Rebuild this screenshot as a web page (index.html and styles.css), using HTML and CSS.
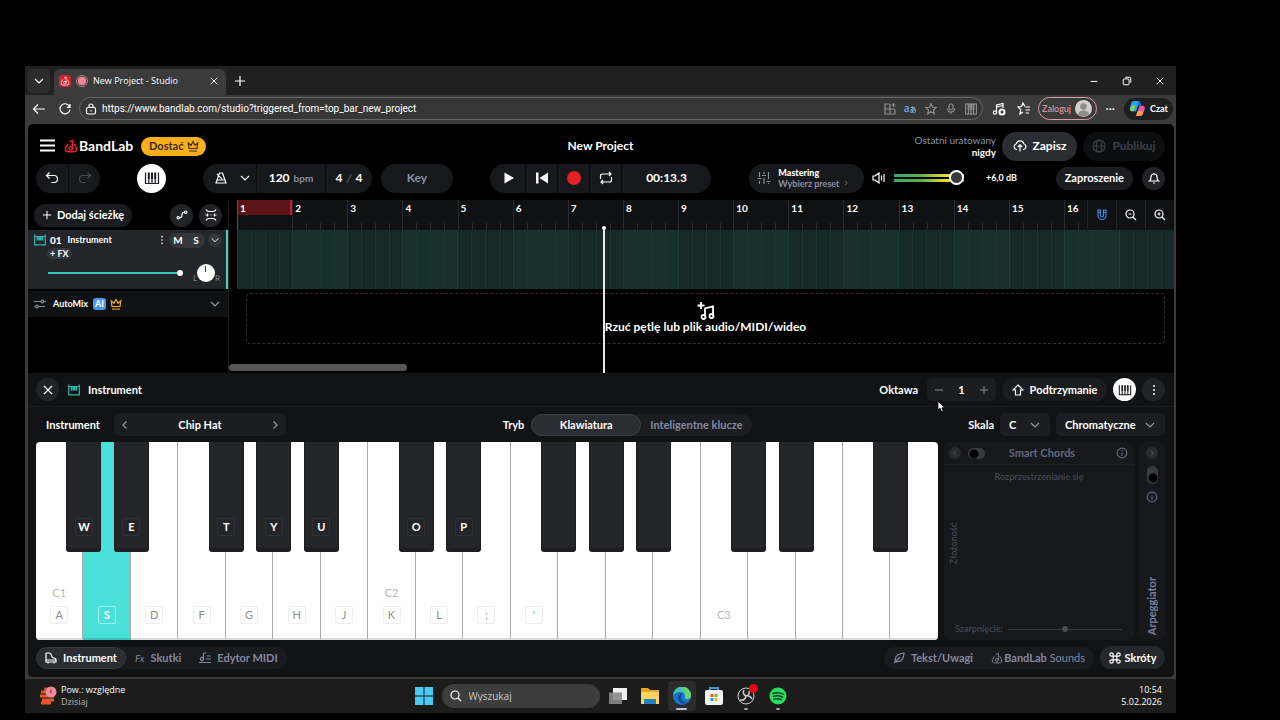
FILE: index.html
```html
<!DOCTYPE html>
<html lang="pl">
<head>
    <meta charset="UTF-8">
    <meta name="viewport" content="width=device-width, initial-scale=1.0">
    <title>New Project - Studio</title>
    <link rel="stylesheet" href="styles.css">
</head>
<body>
    <svg class="sprite" aria-hidden="true">
        <symbol id="chevron-down" viewBox="0 0 12 12"><path d="M2 4l4 4 4-4"/></symbol>
        <symbol id="chevron-left" viewBox="0 0 12 12"><path d="M7.500 2.500L4 6l3.500 3.500"/></symbol>
        <symbol id="chevron-right" viewBox="0 0 12 12"><path d="M4.500 2.500L8 6l-3.500 3.500"/></symbol>
        <symbol id="close" viewBox="0 0 12 12"><path d="M2 2l8 8M10 2l-8 8"/></symbol>
        <symbol id="plus" viewBox="0 0 12 12"><path d="M6 1v10M1 6h10"/></symbol>
        <symbol id="bandlab" viewBox="0 0 16 16"><path d="M4.500 5.500L2 10q-1.500 4.500 3 4.500h6q4.500 0 3-4.500l-2.500-4.500"/><path d="M9.800 10.500V1.500L6.500 3.500"/><circle cx="7.800" cy="10.500" r="2"/></symbol>
        <symbol id="crown" viewBox="0 0 12 12"><path d="M2 8.500L1.200 3l2.800 2.300L6 1.500l2 3.800L10.800 3 10 8.500zM2 11h8"/></symbol>
        <symbol id="keys" viewBox="0 0 16 16"><path d="M1.500 2.500v11h13v-11M4.800 9.500v4M8 9.500v4M11.200 9.500v4"/><path class="thick" d="M4.800 2.500v7M8 2.500v7M11.200 2.500v7"/></symbol>
        <symbol id="midi" viewBox="0 0 12 12"><path d="M.7 .5v10.300h10.600V.5M.7 2.500h10.600"/><path class="thick" d="M3.700 2.500v4M6 2.500v4M8.300 2.500v4"/></symbol>
        <symbol id="info" viewBox="0 0 12 12"><circle cx="6" cy="6" r="4.800"/><path d="M6 5.300V9M6 3.200v1"/></symbol>
        <symbol id="dots" viewBox="0 0 12 12"><g class="solid"><circle cx="6" cy="2" r="1"/><circle cx="6" cy="6" r="1"/><circle cx="6" cy="10" r="1"/></g></symbol>
    </svg>

    <div class="screen">
        <div class="browser">
            <div class="tabs">
                <button class="tab-menu" aria-label="Karty"><svg class="icon"><use href="#chevron-down"/></svg></button>
                <div class="tab">
                    <span class="favicon"><svg class="icon s10"><use href="#bandlab"/></svg></span>
                    <span class="rec-dot"></span>
                    <span class="tab-title">New Project - Studio</span>
                    <button aria-label="Zamknij kartę"><svg class="icon s10"><use href="#close"/></svg></button>
                </div>
                <button class="new-tab" aria-label="Nowa karta"><svg class="icon"><use href="#plus"/></svg></button>
                <div class="window-buttons">
                    <button aria-label="Minimalizuj"><svg class="icon s10" viewBox="0 0 12 12"><path d="M2 6.500h8"/></svg></button>
                    <button aria-label="Przywróć"><svg class="icon s10" viewBox="0 0 12 12"><rect x="1.500" y="3.500" width="7" height="7" rx="1"/><path d="M4 1.500h5.500l1 1V8"/></svg></button>
                    <button aria-label="Zamknij"><svg class="icon s10"><use href="#close"/></svg></button>
                </div>
            </div>
            <div class="address-row">
                <button aria-label="Wstecz"><svg class="icon s14" viewBox="0 0 14 14"><path d="M13 7H1.500M6 2.500L1.500 7 6 11.500"/></svg></button>
                <button class="reload" aria-label="Odśwież"><svg class="icon s14" viewBox="0 0 14 14"><path d="M11.800 5.200A5 5 0 1 0 12 7.500M12 2v3.300H8.700"/></svg></button>
                <div class="address">
                    <svg class="icon" viewBox="0 0 12 12"><rect x="1.500" y="4.500" width="9" height="6.500" rx="1.500"/><path d="M4 4.500V3a2 2 0 0 1 4 0v1.500M6 7v1.500"/></svg>
                    <input type="text" aria-label="Adres" value="https://www.bandlab.com/studio?triggered_from=top_bar_new_project">
                    <svg class="icon dim" viewBox="0 0 12 12"><path d="M5.500 1H1v10h10V6.500M1 6h10M6 1v10M9.500 0v4M7.500 2h4"/></svg>
                    <span class="translate">a<small>あ</small></span>
                    <svg class="icon dim" viewBox="0 0 12 12"><path d="M6 .8l1.500 3.500 3.800.3-2.900 2.500.9 3.700L6 8.800l-3.300 2 .9-3.700L.7 4.600l3.800-.3z"/></svg>
                    <svg class="icon dim" viewBox="0 0 12 12"><rect x="4" y="1" width="4" height="6" rx="2"/><path d="M2.500 5.500a3.500 3.500 0 0 0 7 0M6 9v2"/></svg>
                    <svg class="icon dim" viewBox="0 0 12 12"><rect x=".5" y="1" width="11" height="10"/><path d="M3.500 7v4M6 7v4M8.500 7v4"/><path class="thick" d="M3.500 1v6M6 1v6M8.500 1v6"/></svg>
                </div>
                <svg class="icon s14 ext" viewBox="0 0 14 14"><path d="M4.500 10.500V3L11 1.500V6M4.500 5L11 3.500"/><circle cx="3" cy="10.500" r="1.700"/><circle cx="10" cy="10" r="2.500" stroke-width="2"/></svg>
                <svg class="icon s14 fav" viewBox="0 0 14 14"><path d="M8 4.500L6 1 4.500 4.500 1 5l2.800 2.700L3 12l3-2M8.500 5H13M8.500 8H13M8.500 11H12"/></svg>
                <button class="login">Zaloguj <svg class="avatar" viewBox="0 0 18 18"><circle cx="9" cy="9" r="9" fill="#d2d0ce"/><circle cx="9" cy="7" r="3.500" fill="#8f8d8b"/><path d="M3 15q1-4 6-4t6 4q-2.500 2.500-6 2.500T3 15" fill="#8f8d8b"/></svg></button>
                <span class="more">···</span>
                <button class="copilot">
                    <svg viewBox="0 0 18 18"><path d="M5 1h6l-3.500 11H3Q0 12 1 8l1.500-5Q3 1 5 1" fill="#23a7e8"/><path d="M2 7l5-2-2 7H3Q0 11 2 7" fill="#8fd14b"/><path d="M11 6h3.500q3 0 2 4L15 14q-.6 3-3 3H7.500z" fill="#e655a8"/><path d="M7.500 17l1.500-5h6q-.5 5-3 5z" fill="#ffa04d"/><path d="M10 1q2 0 2.500 2.500L13 6H9z" fill="#2261d9"/></svg>
                    Czat
                </button>
            </div>

            <main class="studio">
                <header class="header">
                    <div class="header-left">
                        <button class="menu" aria-label="Menu"><svg class="icon s16" viewBox="0 0 16 16"><path d="M0 2.500h15M0 7.500h15M0 12.500h15"/></svg></button>
                        <a href="#" class="logo"><svg class="icon s14"><use href="#bandlab"/></svg>BandLab</a>
                        <button class="upgrade">Dostać <svg class="icon"><use href="#crown"/></svg></button>
                    </div>
                    <h1>New Project</h1>
                    <div class="header-right">
                        <p class="saved">Ostatni uratowany<br><b>nigdy</b></p>
                        <button class="pill save"><svg class="icon s14" viewBox="0 0 14 14"><path d="M4 10.500H3.500a3 3 0 0 1-.2-5.800 4 4 0 0 1 7.600 0 3 3 0 0 1-.4 5.800H10M7 12.500V6M4.800 8L7 5.800 9.200 8"/></svg>Zapisz</button>
                        <button class="pill publish" disabled><svg class="icon s14" viewBox="0 0 14 14"><circle cx="7" cy="7" r="6"/><ellipse cx="7" cy="7" rx="2.700" ry="6"/><path d="M1 7h12"/></svg>Publikuj</button>
                    </div>
                </header>

                <div class="transport">
                    <div class="transport-left">
                        <div class="group history">
                            <button aria-label="Cofnij"><svg class="icon s14" viewBox="0 0 14 14"><path d="M4.500 1.500L1.500 4.500l3 3M1.500 4.500h7.500a3.500 3.500 0 0 1 0 7H6.500"/></svg></button>
                            <button aria-label="Ponów" disabled><svg class="icon s14" viewBox="0 0 14 14"><path d="M9.500 1.500l3 3-3 3M12.500 4.500H5a3.500 3.500 0 0 0 0 7h2.500"/></svg></button>
                        </div>
                        <button class="round white" aria-label="Klawiatura"><svg class="icon s16"><use href="#keys"/></svg></button>
                        <div class="group tempo">
                            <button class="metronome" aria-label="Metronom"><svg class="icon s14" viewBox="0 0 14 14"><path d="M5.500 2h3l3.500 10H2zM3 9h8M8 8L3 3"/></svg><svg class="icon"><use href="#chevron-down"/></svg></button>
                            <button class="bpm">120 <small>bpm</small></button>
                            <button class="meter">4 <i>/</i> 4</button>
                        </div>
                        <button class="group key">Key</button>
                    </div>
                    <div class="group player">
                        <button aria-label="Odtwórz"><svg class="icon s14" viewBox="0 0 14 14"><path class="solid" d="M2.500 1.500v11L12 7z"/></svg></button>
                        <button aria-label="Na początek"><svg class="icon s14" viewBox="0 0 14 14"><path class="solid" d="M1 1.500h2.500v11H1zM13 1.500v11L4.500 7z"/></svg></button>
                        <button aria-label="Nagraj"><span class="record"></span></button>
                        <button aria-label="Pętla"><svg class="icon s14" viewBox="0 0 14 14"><path d="M1.500 8V5Q1.500 3 3.500 3H12M10 1l2 2-2 2M12.500 6v3q0 2-2 2H2M4 9l-2 2 2 2"/></svg></button>
                        <span class="time">00:13.3</span>
                    </div>
                    <div class="transport-right">
                        <button class="group mastering">
                            <svg class="icon s14" viewBox="0 0 14 14"><path d="M2.500 1v5M2.500 10v3M7 1v2M7 7v6M11.500 1v7M.5 7.500h4M5 4.500h4M9.500 10.500h4M11.500 12v1"/></svg>
                            <span><b>Mastering</b><br>Wybierz preset <svg class="icon s8"><use href="#chevron-right"/></svg></span>
                        </button>
                        <svg class="icon s14 speaker" viewBox="0 0 14 14"><path d="M1 5h2l4-3v10L3 9H1zM9.500 4.500v5M12 3v8"/></svg>
                        <input class="volume" type="range" min="0" max="100" value="100" aria-label="Głośność">
                        <output class="db">+6,0 dB</output>
                        <button class="pill invite">Zaproszenie</button>
                        <button class="round bell" aria-label="Powiadomienia"><svg class="icon" viewBox="0 0 12 12"><path d="M1.500 9Q3 8 3 5a3 3 0 0 1 6 0q0 3 1.500 4zM5 11h2M6 1v1"/></svg></button>
                    </div>
                </div>

                <section class="arrange">
                    <aside class="tracks">
                        <div class="tracks-head">
                            <button class="pill add-track"><svg class="icon s10"><use href="#plus"/></svg>Dodaj ścieżkę</button>
                            <button class="round" aria-label="Automatyzacja"><svg class="icon" viewBox="0 0 12 12"><path d="M3.500 8.700Q6 9 6 6t2.500-2.700"/><circle cx="2.300" cy="8.800" r="1.200"/><circle cx="9.700" cy="3.200" r="1.200"/></svg></button>
                            <button class="round" aria-label="Dopasuj"><svg class="icon" viewBox="0 0 12 12"><path d="M1 .5q1 2 3 2h4q2 0 3-2M1 11.500q1-2 3-2h4q2 0 3 2M.5 6h3M8.500 6h3M5.500 6h1M2.500 4.500v3M9.500 4.500v3"/></svg></button>
                        </div>
                        <div class="track">
                            <div class="track-row">
                                <svg class="icon teal"><use href="#midi"/></svg>
                                <b>01</b><span class="track-name">Instrument</span>
                                <button aria-label="Opcje"><svg class="icon s10"><use href="#dots"/></svg></button>
                                <div class="mute-solo"><button>M</button><button>S</button></div>
                                <button class="expand" aria-label="Rozwiń"><svg class="icon s10"><use href="#chevron-down"/></svg></button>
                            </div>
                            <button class="fx">+ FX</button>
                            <div class="track-row levels">
                                <input class="track-volume" type="range" min="0" max="100" value="100" aria-label="Głośność ścieżki">
                                <span class="pan"><small>L</small><i></i><small>R</small></span>
                            </div>
                        </div>
                        <div class="automix">
                            <svg class="icon dim" viewBox="0 0 12 12"><path d="M0 3.500h7M10 3.500h2M0 8.500h1M5 8.500h6"/><circle cx="8.500" cy="3.500" r="1.300"/><circle cx="3" cy="8.500" r="1.300"/></svg>
                            <b>AutoMix</b><span class="ai">AI</span>
                            <svg class="icon gold"><use href="#crown"/></svg>
                            <button aria-label="Rozwiń"><svg class="icon"><use href="#chevron-down"/></svg></button>
                        </div>
                    </aside>
                    <div class="timeline">
                        <div class="ruler-row">
                            <ol class="ruler">
                                <li class="loop">1</li><li>2</li><li>3</li><li>4</li><li>5</li><li>6</li><li>7</li><li>8</li>
                                <li>9</li><li>10</li><li>11</li><li>12</li><li>13</li><li>14</li><li>15</li><li>16</li>
                            </ol>
                            <button class="tool" aria-label="Przyciąganie"><svg class="icon blue" viewBox="0 0 12 12"><path d="M2 1v5.500a4 4 0 0 0 8 0V1H7.500v5.500a1.500 1.500 0 0 1-3 0V1zM2 3.500h2.500M7.500 3.500H10"/></svg></button>
                            <button class="tool" aria-label="Pomniejsz"><svg class="icon" viewBox="0 0 12 12"><circle cx="5" cy="5" r="4"/><path d="M8 8l3 3M3.500 5h3"/></svg></button>
                            <button class="tool" aria-label="Powiększ"><svg class="icon" viewBox="0 0 12 12"><circle cx="5" cy="5" r="4"/><path d="M8 8l3 3M3.500 5h3M5 3.500v3"/></svg></button>
                        </div>
                        <div class="clip">
                            <i></i><i></i><i></i><i></i><i></i><i></i><i></i><i></i><i></i>
                            <i></i><i></i><i></i><i></i><i></i><i></i><i></i><i></i>
                        </div>
                        <div class="dropzone">
                            <svg class="icon" viewBox="0 0 18 18"><path d="M4 0v7M.5 3.500h7M8 14.500V6.500l8-2v9.500"/><circle cx="6.500" cy="15" r="2"/><circle cx="14.500" cy="14" r="2"/></svg>
                            <span>Rzuć pętlę lub plik audio/MIDI/wideo</span>
                        </div>
                        <div class="scrollbar"></div>
                        <div class="playhead"></div>
                    </div>
                </section>

                <section class="panel">
                    <div class="panel-head">
                        <button class="round" aria-label="Zamknij"><svg class="icon"><use href="#close"/></svg></button>
                        <svg class="icon teal"><use href="#midi"/></svg>
                        <h2>Instrument</h2>
                        <span class="label">Oktawa</span>
                        <div class="stepper">
                            <button aria-label="Mniej"><svg class="icon s10" viewBox="0 0 12 12"><path d="M1 6h10"/></svg></button>
                            <b>1</b>
                            <button aria-label="Więcej"><svg class="icon s10"><use href="#plus"/></svg></button>
                            <svg class="cursor" viewBox="0 0 10 14"><path d="M1 1v10l2.500-2 1.500 4 2-1-1.500-3.500H9z" fill="#fff" stroke="#000"/></svg>
                        </div>
                        <button class="pill sustain"><svg class="icon" viewBox="0 0 12 12"><path d="M6 1l5 5H8.500v5h-5V6H1z"/></svg>Podtrzymanie</button>
                        <button class="round white" aria-label="Klawiatura"><svg class="icon s14"><use href="#keys"/></svg></button>
                        <button class="round" aria-label="Więcej opcji"><svg class="icon"><use href="#dots"/></svg></button>
                    </div>

                    <div class="options">
                        <div class="options-left">
                            <span class="label">Instrument</span>
                            <div class="preset">
                                <button aria-label="Poprzedni"><svg class="icon"><use href="#chevron-left"/></svg></button>
                                <b>Chip Hat</b>
                                <button aria-label="Następny"><svg class="icon"><use href="#chevron-right"/></svg></button>
                            </div>
                        </div>
                        <div class="mode">
                            <span class="label">Tryb</span>
                            <div class="switcher"><button class="active">Klawiatura</button><button>Inteligentne klucze</button></div>
                        </div>
                        <div class="options-right">
                            <label class="label" for="root">Skala</label>
                            <span class="select root"><select id="root"><option>C</option></select><svg class="icon"><use href="#chevron-down"/></svg></span>
                            <span class="select"><select id="scale" aria-label="Rodzaj skali"><option>Chromatyczne</option></select><svg class="icon"><use href="#chevron-down"/></svg></span>
                        </div>
                    </div>

                    <div class="play-area">
                        <ul class="keyboard">
                            <li><button class="white-key"><em>C1</em><kbd>A</kbd></button><button class="black-key"><kbd>W</kbd></button></li>
                            <li><button class="white-key pressed"><kbd>S</kbd></button><button class="black-key"><kbd>E</kbd></button></li>
                            <li><button class="white-key"><kbd>D</kbd></button></li>
                            <li><button class="white-key"><kbd>F</kbd></button><button class="black-key"><kbd>T</kbd></button></li>
                            <li><button class="white-key"><kbd>G</kbd></button><button class="black-key"><kbd>Y</kbd></button></li>
                            <li><button class="white-key"><kbd>H</kbd></button><button class="black-key"><kbd>U</kbd></button></li>
                            <li><button class="white-key"><kbd>J</kbd></button></li>
                            <li><button class="white-key"><em>C2</em><kbd>K</kbd></button><button class="black-key"><kbd>O</kbd></button></li>
                            <li><button class="white-key"><kbd>L</kbd></button><button class="black-key"><kbd>P</kbd></button></li>
                            <li><button class="white-key"><kbd>;</kbd></button></li>
                            <li><button class="white-key"><kbd>'</kbd></button><button class="black-key"></button></li>
                            <li><button class="white-key"></button><button class="black-key"></button></li>
                            <li><button class="white-key"></button><button class="black-key"></button></li>
                            <li><button class="white-key"></button></li>
                            <li><button class="white-key"><em>C3</em></button><button class="black-key"></button></li>
                            <li><button class="white-key"></button><button class="black-key"></button></li>
                            <li><button class="white-key"></button></li>
                            <li><button class="white-key"></button><button class="black-key"></button></li>
                            <li><button class="white-key"></button></li>
                        </ul>
                        <div class="chords">
                            <div class="chords-head">
                                <button class="mini" aria-label="Zwiń"><svg class="icon s8"><use href="#chevron-left"/></svg></button>
                                <input type="checkbox" class="toggle" aria-label="Smart Chords">
                                <span>Smart Chords</span>
                                <svg class="icon"><use href="#info"/></svg>
                            </div>
                            <p class="spread">Rozprzestrzenianie się</p>
                            <div class="pad"><span>Złożoność</span><div class="grid"></div></div>
                            <div class="strum"><label for="strum">Szarpnięcie:</label><input type="range" id="strum" value="50"></div>
                        </div>
                        <div class="arp">
                            <button class="mini" aria-label="Rozwiń"><svg class="icon s8"><use href="#chevron-right"/></svg></button>
                            <input type="checkbox" class="toggle vertical" aria-label="Arpeggiator">
                            <svg class="icon"><use href="#info"/></svg>
                            <span>Arpeggiator</span>
                        </div>
                    </div>

                    <footer class="panel-foot">
                        <nav class="dock">
                            <button class="active"><svg class="icon" viewBox="0 0 12 12"><path d="M1 10V2q0-1 1-1h2q2 0 2.500 2.500T9 6q2 0 2 2v2zM1 8h10M3 10v1.500M9 10v1.500"/></svg>Instrument</button>
                            <button><i>Fx</i>Skutki</button>
                            <button><svg class="icon" viewBox="0 0 12 12"><path d="M4.500 1v6M4.500 1H7M8 4h4M7 7h5M0 10.500h12"/><circle cx="3" cy="7" r="1.600"/></svg>Edytor MIDI</button>
                        </nav>
                        <nav class="dock right">
                            <button><svg class="icon" viewBox="0 0 12 12"><path d="M1 11l6-6M2.500 9.500Q1 4 7 2q3-1 4-1 0 5-3 7.500-2 1.500-5.500 1"/></svg>Tekst/Uwagi</button>
                            <button class="sounds"><svg class="icon"><use href="#bandlab"/></svg><span><b>BandLab</b> Sounds</span></button>
                        </nav>
                        <button class="pill shortcuts"><svg class="icon" viewBox="0 0 12 12"><path d="M4.200 4.200H2.700A1.700 1.700 0 1 1 4.200 2.700V9.300A1.700 1.700 0 1 1 2.700 7.800H9.300A1.700 1.700 0 1 1 7.800 9.300V2.700A1.700 1.700 0 1 1 9.300 4.200z"/></svg>Skróty</button>
                    </footer>
                </section>
            </main>
        </div>

        <div class="taskbar">
            <div class="weather">
                <svg viewBox="0 0 18 20"><path d="M2 6h13M1 10h14M3 14h12M2 17h10" stroke="#e3592b" stroke-width="3"/><path d="M5 3h8" stroke="#c94a27" stroke-width="3"/><circle cx="12" cy="6" r="5.500" fill="#f08a98"/><path d="M12 3.500v4" stroke="#8a2f3e"/></svg>
                <p>Pow.: względne<br><span>Dzisiaj</span></p>
            </div>
            <div class="apps">
                <button aria-label="Start"><svg viewBox="0 0 18 18"><path d="M0 0h8.500v8.500H0zM9.500 0H18v8.500H9.500zM0 9.500h8.500V18H0zM9.500 9.500H18V18H9.500z" fill="#4cc8f5"/></svg></button>
                <label class="search"><svg class="icon" viewBox="0 0 12 12"><circle cx="5" cy="5" r="4"/><path d="M8 8l3 3"/></svg><input type="text" placeholder="Wyszukaj" aria-label="Wyszukaj"></label>
                <button aria-label="Widok zadań"><svg viewBox="0 0 18 18"><path d="M4 1h14v12H4z" fill="#f0f0f0"/><path d="M0 5.500h13V17H0z" fill="#8a8a8a" opacity=".9"/></svg></button>
                <button aria-label="Pliki"><svg viewBox="0 0 18 18"><path d="M0 1h7l2 2h9v14H0z" fill="#e8a621"/><path d="M0 5h18v12H0z" fill="#ffd55f"/><path d="M3 12h12v5H3z" fill="#2382c8"/></svg></button>
                <button class="running current" aria-label="Edge"><svg viewBox="0 0 18 18"><circle cx="9" cy="9" r="9" fill="#1877c9"/><path d="M0 9a9 9 0 0 1 18-1q0 4-4 4-3 0-2-3-1-4-5-4-5 0-7 4" fill="#3dc2b4"/><path d="M8 0q9 0 10 8 0 4-4 4-3 0-2-3 1-5-4-9" fill="#69d66a"/><path d="M8 6q-5 3-2 8 4 5 9 1-7 1-7-5 0-2 2-3-1-1-2-1" fill="#124a94"/></svg></button>
                <button aria-label="Store"><svg viewBox="0 0 18 18"><path d="M5 4V1h8v3" fill="none" stroke="#3b9be0" stroke-width="2"/><rect y="3" width="18" height="15" rx="2" fill="#f3f3f3"/><path d="M5.500 7h3v3h-3z" fill="#f25022"/><path d="M9.500 7h3v3h-3z" fill="#7fba00"/><path d="M5.500 11h3v3h-3z" fill="#00a4ef"/><path d="M9.500 11h3v3h-3z" fill="#ffb900"/></svg></button>
                <button class="running" aria-label="OBS"><svg viewBox="0 0 18 18"><circle cx="9" cy="9" r="8" fill="#202020" stroke="#ccc"/><path d="M7 3q-2 4 2 6 4-1 6 3M9 9q-1 5-6 4M9 9q4-1 3-5" fill="none" stroke="#ccc" stroke-width="1.500"/></svg><span class="badge"></span></button>
                <button class="running" aria-label="Spotify"><svg viewBox="0 0 18 18"><circle cx="9" cy="9" r="8.500" fill="#28dc64"/><path d="M4 6.300q5.500-1.500 10.500 1M4.500 9.300q4.500-1.300 9 .8M5 12q4-1 7.500.7" fill="none" stroke="#123d20" stroke-width="1.500" stroke-linecap="round"/></svg></button>
            </div>
            <p class="clock">10:54<br>5.02.2026</p>
        </div>
    </div>
</body>
</html>
```
FILE: styles.css
```css
* {
    box-sizing: border-box;
}
body {
    margin: 0;
    background-color: #000;
    color: #fff;
    font-family: Lato, "Noto Sans", sans-serif;
    font-size: 11px;
    line-height: 12px;
}
h1, h2, p, ol, ul {
    margin: 0;
    padding: 0;
    list-style: none;
    font-weight: bold;
}
h1 {
    font-size: 12px;
    line-height: 14px;
}
h2 {
    font-size: 11px;
    line-height: 12px;
}
button, input, select, kbd {
    font: inherit;
    color: inherit;
}
button {
    display: flex;
    align-items: center;
    justify-content: center;
    padding: 0;
    border: 0;
    background: none;
    font-weight: bold;
    white-space: nowrap;
    cursor: pointer;
}
input {
    min-width: 0;
    margin: 0;
}
input[type="text"] {
    flex: 1;
    padding: 0;
    border: 0;
    outline: 0;
    background: none;
}
input[type="range"] {
    appearance: none;
    background: none;
}
.sprite {
    position: absolute;
    width: 0;
    height: 0;
}
.icon {
    flex: none;
    width: 12px;
    height: 12px;
    fill: none;
    stroke: currentColor;
    stroke-width: 1.2;
}
.s8 {
    width: 8px;
    height: 8px;
}
.s10 {
    width: 10px;
    height: 10px;
}
.s14 {
    width: 14px;
    height: 14px;
}
.s16 {
    width: 16px;
    height: 16px;
}
.solid {
    fill: currentColor;
    stroke: none;
}
.thick {
    stroke-width: 2;
}
.dim {
    color: #8d8d8f;
}
.teal {
    color: #2fb8ac;
}
.gold {
    color: #f5a91d;
}
.blue {
    color: #3f8be8;
}

/* browser */
.screen {
    margin: 66px 104px 0 25px;
    background-color: #1c1c1c;
}
.browser {
    background-color: #3b3b3b;
    padding-bottom: 2px;
    font-family: "Open Sans", "Noto Sans", sans-serif;
}
.tabs {
    display: flex;
    align-items: center;
    height: 29px;
    padding: 0 8px 0 2px;
    background-color: #202020;
}
.tab-menu {
    width: 23px;
    height: 24px;
    border-radius: 5px;
    background-color: #2c2c2c;
}
.tab {
    display: flex;
    align-items: center;
    align-self: flex-end;
    gap: 5px;
    width: 172px;
    height: 26px;
    margin-left: 4px;
    padding: 0 7px 2px 5px;
    border-radius: 6px 6px 0 0;
    background-color: #3b3b3b;
    font-size: 9px;
}
.tab-title {
    flex: 1;
}
.favicon {
    display: flex;
    padding: 1px;
    border-radius: 3px;
    background-color: #d3222c;
}
.rec-dot {
    width: 12px;
    height: 12px;
    border: 2px solid #59484a;
    border-radius: 50%;
    outline: 1px solid #a87c80;
    outline-offset: -1px;
    background-color: #f08a98;
}
.new-tab {
    margin-left: 8px;
}
.window-buttons {
    display: flex;
    margin-left: auto;
}
.window-buttons button {
    width: 17px;
    margin-left: 16px;
}
.address-row {
    display: flex;
    align-items: center;
    height: 29px;
    padding: 0 3px 2px 7px;
}
.reload {
    margin-left: 12px;
}
.address {
    display: flex;
    flex: 1;
    align-items: center;
    gap: 8px;
    height: 23px;
    margin: 0 9px 0 7px;
    padding: 0 5px;
    border: 1px solid #666;
    border-radius: 12px;
    background-color: #363636;
    font-size: 10px;
}
.address input {
    margin-left: -3px;
    font-family: Roboto, "Noto Sans", sans-serif;
}
.translate {
    color: #6fa8dc;
    font-weight: 600;
    white-space: nowrap;
}
.translate small {
    font-family: "Noto Sans CJK JP", sans-serif;
    font-size: 7px;
}
.fav {
    margin: 0 7px 0 11px;
}
.login {
    gap: 4px;
    width: 59px;
    height: 23px;
    border: 1px solid #d99ca4;
    border-radius: 12px;
    color: #e8a0ac;
    font-family: Lato, sans-serif;
    font-size: 9px;
    font-weight: normal;
}
.avatar {
    flex: none;
    width: 17px;
    height: 17px;
}
.more {
    margin: 0 9px;
    font-weight: bold;
}
.copilot {
    gap: 4px;
    width: 49px;
    height: 22px;
    border-radius: 11px;
    background-color: #1e1e1e;
    font-family: Lato, sans-serif;
    font-size: 9px;
}
.copilot svg {
    width: 17px;
    height: 17px;
}

/* studio */
.studio {
    margin: 0 2px 0 3px;
    border-radius: 5px;
    overflow: hidden;
    background-color: #000;
    font-family: Lato, "Noto Sans", sans-serif;
}
.header, .transport {
    display: grid;
    grid-template-columns: 1fr auto 1fr;
    align-items: center;
    padding: 0 9px 0 8px;
}
.header {
    height: 39px;
    padding-top: 5px;
}
.transport {
    height: 30px;
}
.header-left, .header-right, .transport-left, .transport-right {
    display: flex;
    align-items: center;
}
.header-right {
    justify-content: flex-end;
    gap: 6px;
}
.menu {
    margin: 0 8px 0 4px;
}
.menu .icon {
    stroke-width: 1.8;
}
.logo {
    display: flex;
    align-items: center;
    gap: 1px;
    color: #fff;
    font-size: 14px;
    font-weight: bold;
    text-decoration: none;
}
.logo .icon {
    color: #e0222e;
    stroke-width: 1.8;
}
.upgrade {
    gap: 3px;
    width: 65px;
    height: 19px;
    margin-left: 8px;
    border-radius: 10px;
    background-color: #fbb01b;
    color: #40280a;
}
.saved {
    color: #8596ab;
    font-size: 10px;
    font-weight: normal;
    text-align: right;
}
.saved b {
    color: #fff;
}
.pill {
    gap: 6px;
    height: 23px;
    padding: 0 9px;
    border-radius: 15px;
    background-color: #1b1c20;
}
.save, .publish {
    width: 75px;
    height: 29px;
    font-size: 12px;
}
.save {
    background-color: #2c2d32;
}
.publish {
    width: 82px;
    background-color: #0d0e10;
    color: #3c3f45;
}
.group {
    display: flex;
    align-items: center;
    height: 29px;
    border-radius: 15px;
    overflow: hidden;
    background-color: #17181b;
}
.group > button {
    height: 100%;
}
.group > * + * {
    border-left: 1px solid #0a0a0c;
}
.history button {
    width: 32px;
}
.history button:disabled {
    color: #4a4c52;
}
.round {
    flex: none;
    width: 23px;
    height: 23px;
    border-radius: 50%;
    background-color: #222327;
}
.round.white {
    background-color: #fff;
    color: #1b1c20;
}
.transport .white {
    width: 29px;
    height: 29px;
    margin: 0 37px;
}
.metronome {
    gap: 11px;
    width: 53px;
    padding-left: 5px;
}
.bpm {
    gap: 4px;
    width: 69px;
    font-size: 12px;
}
.bpm small {
    color: #8a90a8;
    font-size: 10px;
}
.meter {
    gap: 4px;
    width: 47px;
    font-size: 12px;
}
.meter i {
    color: #777;
    font-weight: normal;
}
.key {
    justify-content: center;
    width: 72px;
    margin-left: 9px;
    color: #8793ab;
    font-size: 12px;
}
.player > button {
    width: 32px;
}
.player > button:first-child {
    width: 35px;
    padding-left: 2px;
}
.record {
    width: 14px;
    height: 14px;
    border-radius: 50%;
    background-color: #e61e25;
}
.player > .time {
    width: 90px;
    height: 100%;
    font-size: 12px;
    font-weight: bold;
    line-height: 28px;
    text-align: center;
}
.transport-right {
    padding-left: 38px;
}
.mastering {
    gap: 7px;
    width: 115px;
    padding-right: 6px;
    color: #8a8fa6;
    font-size: 9px;
    line-height: 11px;
    text-align: left;
}
.mastering > * + * {
    border: 0;
}
.mastering b {
    color: #fff;
}
.speaker {
    margin: 0 8px;
}
.volume {
    width: 70px;
    height: 16px;
}
.volume::-webkit-slider-runnable-track {
    height: 8px;
    background: linear-gradient(transparent 3px, #000 3px, #000 5px, transparent 5px), linear-gradient(90deg, #35a46b, #62b34f 40%, #f2dc2c 75%, #e87b20);
}
.volume::-webkit-slider-thumb {
    appearance: none;
    width: 15px;
    height: 15px;
    margin-top: -4px;
    border: 2px solid #fff;
    border-radius: 50%;
    background-color: #3a3a3c;
}
.db {
    margin-left: 22px;
    font-size: 9px;
    font-weight: bold;
}
.invite {
    margin: 0 9px 0 auto;
}

/* arrangement */
.arrange {
    display: flex;
    height: 180px;
    padding-top: 7px;
}
.tracks {
    flex: none;
    width: 201px;
    border-right: 1px solid #1d1d1f;
}
.tracks-head {
    display: flex;
    align-items: center;
    gap: 6px;
    height: 30px;
    padding: 0 6px;
}
.tracks-head .pill {
    width: 98px;
    margin-right: auto;
}
.add-track {
    gap: 5px;
}
.track {
    height: 59px;
    padding: 2px 4px 0 6px;
    border-right: 2px solid #43d4c6;
    background-color: #22252a;
}
.track-row {
    display: flex;
    align-items: center;
    height: 16px;
    font-size: 10px;
    font-weight: bold;
}
.track-row b {
    margin: 0 6px 0 4px;
}
.track-name {
    flex: 1;
    font-size: 9px;
}
.mute-solo {
    display: flex;
    margin: 0 3px 0 2px;
    border-radius: 8px;
    background-color: #33363b;
}
.mute-solo button {
    width: 18px;
    height: 15px;
}
.expand {
    width: 14px;
    height: 14px;
    border-radius: 50%;
    background-color: #33363b;
}
.fx {
    margin-left: 13px;
    padding: 0 3px;
    border-radius: 6px;
    background-color: #33363b;
    font-size: 9px;
    line-height: 11px;
}
.levels {
    height: 28px;
    gap: 10px;
    padding: 0 2px 0 14px;
}
.track-volume {
    flex: 1;
    height: 8px;
}
.track-volume::-webkit-slider-runnable-track {
    height: 2px;
    background-color: #35c4b7;
}
.track-volume::-webkit-slider-thumb {
    appearance: none;
    width: 6px;
    height: 6px;
    margin-top: -2px;
    border-radius: 50%;
    background-color: #fff;
}
.pan {
    display: flex;
    align-items: flex-end;
    color: #84878c;
    line-height: 8px;
}
.pan small {
    font-size: 8px;
    font-weight: normal;
}
.pan i {
    width: 18px;
    height: 18px;
    border-radius: 50%;
    background: linear-gradient(#444, #444) center 2px / 1px 6px no-repeat #fff;
}
.automix {
    display: flex;
    align-items: center;
    gap: 4px;
    height: 26px;
    margin-top: 2px;
    padding: 0 7px 0 6px;
    background-color: #101113;
    font-size: 9px;
}
.automix b {
    margin: 0 1px 0 3px;
}
.automix button {
    margin-left: auto;
    color: #9a9a9c;
}
.ai {
    padding: 0 2px;
    border-radius: 3px;
    background-color: #4a97ee;
    font-weight: bold;
}
.timeline {
    position: relative;
    flex: 1;
    min-width: 0;
    padding-left: 8px;
}
.ruler-row {
    display: flex;
    height: 30px;
    background-color: #101113;
}
.ruler {
    display: grid;
    flex: 1;
    grid-template-columns: repeat(15, 12fr) 5fr;
}
.ruler li {
    padding: 2px 0 0 2px;
    border-left: 1px solid #2a2c2f;
    background: repeating-linear-gradient(90deg, transparent 0 13px, #2a2c2f 13px 14px) 0 100% / 100% 7px no-repeat;
    font-size: 10px;
    font-weight: bold;
}
.ruler .loop {
    border-color: #c3202c;
    background: linear-gradient(90deg, #5c1419 97%, #c3202c 97%) 0 0 / 100% 15px no-repeat;
}
.tool {
    width: 29px;
    border-left: 1px solid #232427;
}
.clip {
    display: grid;
    grid-template-columns: repeat(17, 1fr);
    height: 59px;
    overflow: hidden;
}
.clip i {
    border-left: 1px solid #1e3a39;
    background: repeating-linear-gradient(90deg, transparent 0 13px, #1b3534 13px 14px) #172a2b;
}
.clip i:nth-child(even) {
    background-color: #183130;
}
.dropzone {
    display: flex;
    flex-direction: column;
    align-items: center;
    height: 51px;
    margin: 4px 9px 0;
    padding-top: 8px;
    border: 1px dashed #303032;
    border-radius: 4px;
    font-size: 12px;
    font-weight: bold;
    line-height: 14px;
}
.dropzone .icon {
    width: 18px;
    height: 18px;
    stroke-width: 1.8;
}
.scrollbar {
    width: 19%;
    height: 7px;
    margin: 20px 0 0 -8px;
    border-radius: 4px;
    background-color: #565656;
}
.playhead {
    position: absolute;
    top: 28px;
    bottom: 0;
    left: 39.600%;
    width: 2px;
    background-color: #e8e8e8;
}
.playhead::before {
    content: "";
    position: absolute;
    top: -2px;
    left: -1px;
    width: 4px;
    height: 4px;
    border-radius: 50%;
    background-color: #fff;
}

/* instrument panel */
.panel {
    background-color: #111214;
}
.panel-head {
    display: flex;
    align-items: center;
    height: 34px;
    padding: 0 9px 0 8px;
    border-bottom: 1px solid #1c1d20;
}
.panel-head .teal {
    margin: 0 8px 0 9px;
}
.panel-head h2 {
    flex: 1;
}
.label {
    font-weight: bold;
}
.stepper {
    position: relative;
    display: flex;
    align-items: center;
    justify-content: space-between;
    width: 69px;
    height: 23px;
    margin: 0 6px 0 9px;
    padding: 0 7px;
    border-radius: 5px;
    background-color: #1b1d20;
}
.stepper button {
    color: #8b8d92;
}
.cursor {
    position: absolute;
    top: 22px;
    left: 10px;
    width: 9px;
    height: 13px;
}
.sustain {
    width: 105px;
    margin-right: 6px;
}
.panel-head .white {
    margin-right: 6px;
}
.options {
    display: flex;
    align-items: center;
    justify-content: space-between;
    height: 35px;
    padding: 0 9px 0 18px;
}
.options-left, .options-right, .mode {
    display: flex;
    align-items: center;
}
.preset {
    display: flex;
    align-items: center;
    justify-content: space-between;
    width: 172px;
    height: 23px;
    margin-left: 14px;
    padding: 0 5px;
    border-radius: 5px;
    background-color: #1b1d20;
}
.preset button {
    color: #9a9ca2;
}
.mode {
    gap: 7px;
}
.switcher {
    display: flex;
    height: 22px;
    border-radius: 11px;
    background-color: #1b1d20;
}
.switcher button {
    padding: 0 9px;
    border-radius: 11px;
    color: #8389a3;
}
.switcher .active {
    width: 110px;
    border: 1px solid #3c3f44;
    background-color: #2a2d31;
    color: #fff;
}
.options-right {
    justify-content: flex-end;
    gap: 6px;
}
.select {
    display: flex;
    align-items: center;
    height: 23px;
    padding: 0 9px;
    border-radius: 5px;
    background-color: #1b1d20;
}
.select select {
    appearance: none;
    width: 79px;
    padding: 0;
    border: 0;
    background: none;
    font-weight: bold;
}
.root select {
    width: 20px;
}
.select .icon {
    color: #9a9ca2;
}
.play-area {
    display: flex;
    height: 198px;
    padding: 0 9px 0 8px;
}
.keyboard {
    display: flex;
    flex: 1;
    overflow: hidden;
    border-radius: 4px;
}
.keyboard li {
    position: relative;
    flex: 1;
}
.white-key {
    flex-direction: column;
    justify-content: flex-end;
    gap: 4px;
    width: 100%;
    height: 100%;
    padding-bottom: 14px;
    border-right: 1px solid #a9a9a9;
    border-bottom: 2px solid #dcdcdc;
    background-color: #fff;
    color: #8d8d8f;
    font-weight: normal;
}
.keyboard li:last-child .white-key {
    border-right: 0;
}
.white-key.pressed {
    border-bottom-color: #3cc5be;
    background-color: #48e0d8;
    color: #fff;
}
.white-key em {
    color: #b9b9bb;
    font-style: normal;
    line-height: 18px;
}
.white-key kbd, .black-key kbd {
    width: 18px;
    border: 1px solid #efefef;
    border-radius: 2px;
    line-height: 16px;
}
.white-key.pressed kbd {
    border-color: #a5f3ee;
    font-weight: bold;
}
.black-key {
    position: absolute;
    z-index: 1;
    top: 0;
    right: -18px;
    align-items: flex-end;
    width: 35px;
    height: 110px;
    padding-bottom: 12px;
    border: solid #1e1e21;
    border-width: 0 1px 4px;
    border-radius: 0 0 3px 3px;
    background-color: #242529;
}
.black-key kbd {
    border-color: #303136;
}
.chords, .arp {
    border-radius: 6px;
    background-color: #17181c;
    color: #62677b;
}
.chords {
    display: flex;
    flex-direction: column;
    width: 190px;
    margin: 0 5px 0 6px;
}
.chords-head {
    display: flex;
    align-items: center;
    gap: 7px;
    height: 23px;
    padding: 0 6px 0 5px;
    border-bottom: 1px solid #1d1f23;
    font-weight: bold;
}
.chords-head span {
    flex: 1;
    padding-right: 17px;
    text-align: center;
}
.mini {
    width: 12px;
    height: 12px;
    border-radius: 50%;
    background-color: #2a2b2f;
}
.toggle {
    appearance: none;
    width: 17px;
    height: 11px;
    border-radius: 6px;
    background: radial-gradient(circle at 6px 6px, #000 4px, #3a3b40 5px);
}
.toggle.vertical {
    width: 11px;
    height: 18px;
    background: radial-gradient(circle at 6px 12px, #000 4px, #3a3b40 5px);
}
.spread {
    padding-top: 6px;
    color: #3f424c;
    font-size: 9px;
    text-align: center;
}
.pad {
    display: flex;
    flex: 1;
    align-items: center;
    gap: 5px;
    padding: 0 10px 14px 4px;
}
.pad span, .arp span {
    writing-mode: vertical-rl;
    transform: rotate(180deg);
}
.pad span {
    color: #3f424c;
    font-size: 9px;
    font-weight: bold;
}
.grid {
    flex: 1;
    height: 100%;
    background: radial-gradient(#1c1e22 1px, transparent 1px) 0 0 / 10px 10px;
}
.strum {
    display: flex;
    align-items: center;
    gap: 5px;
    height: 22px;
    padding: 0 12px 0 11px;
    color: #3f424c;
    font-size: 9px;
    font-weight: bold;
}
.strum input {
    flex: 1;
    height: 8px;
}
.strum input::-webkit-slider-runnable-track {
    height: 1px;
    background-color: #34363d;
}
.strum input::-webkit-slider-thumb {
    appearance: none;
    width: 6px;
    height: 6px;
    margin-top: -3px;
    border-radius: 50%;
    background-color: #4a4c54;
}
.arp {
    display: flex;
    flex-direction: column;
    align-items: center;
    gap: 7px;
    width: 26px;
    padding: 5px 0;
    font-weight: bold;
}
.arp span {
    margin-top: auto;
    color: #7b819b;
}
.panel-foot {
    display: flex;
    align-items: center;
    height: 37px;
    padding: 0 9px 2px 8px;
}
.dock {
    display: flex;
    height: 22px;
    border-radius: 11px;
    background-color: #191b1f;
}
.dock button {
    gap: 6px;
    padding: 0 9px;
    border-radius: 11px;
    color: #8389a0;
}
.dock .active {
    width: 90px;
    border: 1px solid #36393e;
    background-color: #2a2d31;
    color: #fff;
}
.dock.right {
    margin: 0 6px 0 auto;
}
.dock .sounds {
    gap: 1px;
    font-weight: normal;
}
.dock i {
    font-size: 10px;
    font-weight: normal;
}
.shortcuts {
    gap: 4px;
    width: 65px;
    background-color: #25272b;
}

/* taskbar */
.taskbar {
    display: grid;
    grid-template-columns: 1fr auto 1fr;
    align-items: center;
    height: 34px;
    padding: 0 14px;
    font-family: "Open Sans", "Noto Sans", sans-serif;
    font-size: 9px;
}
.taskbar p {
    font-weight: normal;
}
.weather {
    display: flex;
    align-items: center;
    gap: 4px;
}
.weather svg {
    width: 18px;
    height: 20px;
}
.weather span {
    color: #b5b5b5;
}
.apps {
    display: flex;
    align-items: center;
    gap: 4px;
}
.apps button {
    position: relative;
    width: 28px;
    height: 30px;
    border-radius: 4px;
}
.apps button > svg {
    width: 18px;
    height: 18px;
}
.apps .running::after {
    content: "";
    position: absolute;
    bottom: 1px;
    width: 4px;
    height: 2px;
    border-radius: 1px;
    background-color: #a0a0a0;
}
.apps .current {
    background-color: #2c2c2c;
}
.apps .current::after {
    width: 11px;
    background-color: #b8c4cc;
}
.badge {
    position: absolute;
    top: 3px;
    right: 2px;
    width: 9px;
    height: 9px;
    border-radius: 50%;
    background-color: #e30613;
}
.search {
    display: flex;
    align-items: center;
    gap: 7px;
    width: 158px;
    height: 24px;
    padding: 0 8px;
    border-radius: 12px;
    background-color: #3d3d3d;
    font-size: 10px;
}
.search input::placeholder {
    color: #c8c8c8;
}
.clock {
    text-align: right;
}
```
